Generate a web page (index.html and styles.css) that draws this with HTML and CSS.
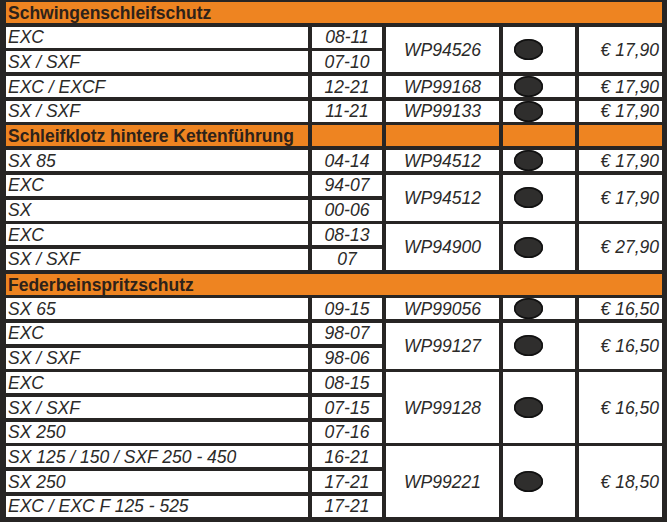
FILE: index.html
```html
<!DOCTYPE html>
<html lang="de">
<head>
<meta charset="utf-8">
<title>Schutzteile</title>
<link rel="stylesheet" href="styles.css">
</head>
<body>
<div class="sheet">
  <div class="head full">Schwingenschleifschutz</div>

  <div class="cell model">EXC</div>
  <div class="cell year">08-11</div>
  <div class="cell code r2">WP94526</div>
  <div class="cell dot r2"><span class="blob"></span></div>
  <div class="cell price r2">€ 17,90</div>
  <div class="cell model">SX / SXF</div>
  <div class="cell year">07-10</div>

  <div class="cell model">EXC / EXCF</div>
  <div class="cell year">12-21</div>
  <div class="cell code">WP99168</div>
  <div class="cell dot"><span class="blob"></span></div>
  <div class="cell price">€ 17,90</div>

  <div class="cell model">SX / SXF</div>
  <div class="cell year">11-21</div>
  <div class="cell code">WP99133</div>
  <div class="cell dot"><span class="blob"></span></div>
  <div class="cell price">€ 17,90</div>

  <div class="head">Schleifklotz hintere Kettenführung</div>
  <div class="head"></div>
  <div class="head"></div>
  <div class="head"></div>
  <div class="head"></div>

  <div class="cell model">SX 85</div>
  <div class="cell year">04-14</div>
  <div class="cell code">WP94512</div>
  <div class="cell dot"><span class="blob"></span></div>
  <div class="cell price">€ 17,90</div>

  <div class="cell model">EXC</div>
  <div class="cell year">94-07</div>
  <div class="cell code r2">WP94512</div>
  <div class="cell dot r2"><span class="blob"></span></div>
  <div class="cell price r2">€ 17,90</div>
  <div class="cell model">SX</div>
  <div class="cell year">00-06</div>

  <div class="cell model">EXC</div>
  <div class="cell year">08-13</div>
  <div class="cell code r2">WP94900</div>
  <div class="cell dot r2"><span class="blob"></span></div>
  <div class="cell price r2">€ 27,90</div>
  <div class="cell model">SX / SXF</div>
  <div class="cell year">07</div>

  <div class="head full">Federbeinspritzschutz</div>

  <div class="cell model">SX 65</div>
  <div class="cell year">09-15</div>
  <div class="cell code">WP99056</div>
  <div class="cell dot"><span class="blob"></span></div>
  <div class="cell price">€ 16,50</div>

  <div class="cell model">EXC</div>
  <div class="cell year">98-07</div>
  <div class="cell code r2">WP99127</div>
  <div class="cell dot r2"><span class="blob"></span></div>
  <div class="cell price r2">€ 16,50</div>
  <div class="cell model">SX / SXF</div>
  <div class="cell year">98-06</div>

  <div class="cell model">EXC</div>
  <div class="cell year">08-15</div>
  <div class="cell code r3">WP99128</div>
  <div class="cell dot r3"><span class="blob"></span></div>
  <div class="cell price r3">€ 16,50</div>
  <div class="cell model">SX / SXF</div>
  <div class="cell year">07-15</div>
  <div class="cell model">SX 250</div>
  <div class="cell year">07-16</div>

  <div class="cell model">SX 125 / 150 / SXF 250 - 450</div>
  <div class="cell year">16-21</div>
  <div class="cell code r3">WP99221</div>
  <div class="cell dot r3"><span class="blob"></span></div>
  <div class="cell price r3">€ 18,50</div>
  <div class="cell model">SX 250</div>
  <div class="cell year">17-21</div>
  <div class="cell model">EXC / EXC F 125 - 525</div>
  <div class="cell year">17-21</div>
</div>
</body>
</html>
```
FILE: styles.css
```css
html, body {
  margin: 0;
  padding: 0;
  background: #272524;
}

.sheet {
  display: grid;
  grid-template-columns: 302px 70px 113px 72px 83px;
  grid-auto-rows: 21px;
  column-gap: 4px;
  row-gap: 3.7px;
  padding: 2px 6px 5px 6px;
  width: 667px;
  box-sizing: border-box;
  font-family: "Liberation Sans", Arial, sans-serif;
  font-size: 17.5px;
  line-height: 21px;
  color: #2b2a29;
}

.head {
  background: #ee8421;
  color: #2e2219;
  font-weight: bold;
  padding: 1px 0 0 2px;
  white-space: nowrap;
}

.full {
  grid-column: 1 / -1;
}

.cell {
  background: #ffffff;
  font-style: italic;
  display: flex;
  align-items: center;
  white-space: nowrap;
  padding-top: 1px;
  box-sizing: border-box;
}

.r2 { grid-row: span 2; }
.r3 { grid-row: span 3; }

.model { padding-left: 2px; }
.year, .code { justify-content: center; }
.price { justify-content: flex-end; padding-right: 3px; }
.dot { padding-left: 11px; padding-top: 0; }

.blob {
  display: block;
  width: 29px;
  height: 21px;
  border-radius: 50%;
  background: #2f2e2d;
  box-shadow: inset 0 0 0 1.5px #111111;
}
```
